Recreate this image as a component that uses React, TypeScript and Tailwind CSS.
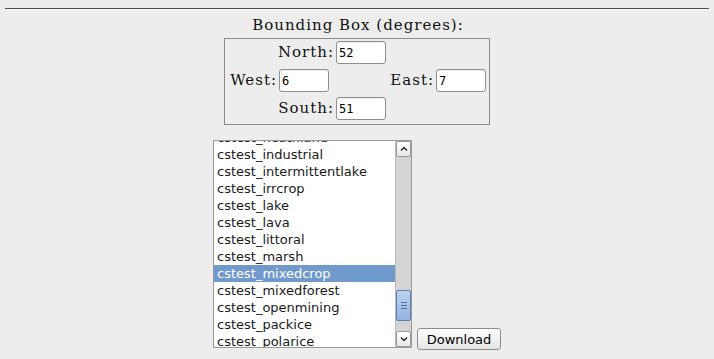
import React from "react";

const items = [
  "cstest_heathland",
  "cstest_industrial",
  "cstest_intermittentlake",
  "cstest_irrcrop",
  "cstest_lake",
  "cstest_lava",
  "cstest_littoral",
  "cstest_marsh",
  "cstest_mixedcrop",
  "cstest_mixedforest",
  "cstest_openmining",
  "cstest_packice",
  "cstest_polarice",
];

function Field({ value }: { value: string }) {
  return (
    <div className="w-[50px] h-[23px] rounded-[3px] border border-[#8e8e8e] bg-white pl-[2px] flex items-center font-['DejaVu_Sans_Mono',monospace] text-[12px] tracking-normal text-black shadow-[inset_0_1px_1px_rgba(0,0,0,0.08)]">
      {value}
    </div>
  );
}

function Label({ children, w }: { children: React.ReactNode; w: string }) {
  return <div className={`${w} text-right pr-[2px] leading-[23px]`}>{children}</div>;
}

export default function App() {
  return (
    <div className="min-h-screen bg-[#ededed] font-['DejaVu_Serif',serif] text-[15px] tracking-[1px] text-[#111]">
      <div className="pt-[8px] px-[5px]">
        <div className="h-[2px] border-t border-t-[#4f4f4f] border-b border-b-[#fbfbfb]" />
      </div>
      <div className="flex flex-col items-center">
        <div className="mt-[5px] leading-[20px] translate-x-[1px]">Bounding Box (degrees):</div>
        <div className="mt-[3px] w-[266px] h-[87px] border border-[#8a8a8a] pt-[2px]">
          <div className="flex h-[23px]">
            <Label w="w-[111px]">North:</Label>
            <Field value="52" />
          </div>
          <div className="flex h-[23px] mt-[5px]">
            <Label w="w-[54px]">West:</Label>
            <Field value="6" />
            <Label w="w-[107px]">East:</Label>
            <Field value="7" />
          </div>
          <div className="flex h-[23px] mt-[5px]">
            <Label w="w-[111px]">South:</Label>
            <Field value="51" />
          </div>
        </div>
        <div className="mt-[15px] flex items-end gap-[5px] font-['DejaVu_Sans',sans-serif] tracking-normal">
          <div className="mb-[2px] w-[199px] h-[208px] border border-[#9a9a9a] bg-white flex overflow-hidden">
            <div className="flex-1 overflow-hidden">
              <div className="-mt-[12px]">
                {items.map((it) => (
                  <div
                    key={it}
                    className={`h-[17px] leading-[17px] pl-[3px] text-[13px] whitespace-nowrap ${
                      it === "cstest_mixedcrop" ? "bg-[#7099cc] text-white" : "text-[#1a1a1a]"
                    }`}
                  >
                    {it}
                  </div>
                ))}
              </div>
            </div>
            <div className="w-[16px] bg-[#d4d4d4] border-l border-[#b8b8b8] flex flex-col">
              <div className="h-[16px] m-0 rounded-[2px] border border-[#9a9a9a] bg-gradient-to-b from-white to-[#e8e8e8] flex items-center justify-center">
                <svg width="8" height="6" viewBox="0 0 8 6">
                  <path d="M1 4.5 L4 1.5 L7 4.5" fill="none" stroke="#222" strokeWidth="1.4" />
                </svg>
              </div>
              <div className="flex-1 flex flex-col justify-end pb-[10px]">
                <div className="h-[31px] rounded-[2px] border border-[#5a80b8] bg-gradient-to-b from-[#bcd3f0] to-[#94b4df] flex flex-col items-center justify-center gap-[2px]">
                  <div className="w-[6px] h-px bg-[#4d6e9e]" />
                  <div className="w-[6px] h-px bg-[#4d6e9e]" />
                  <div className="w-[6px] h-px bg-[#4d6e9e]" />
                </div>
              </div>
              <div className="h-[16px] rounded-[2px] border border-[#9a9a9a] bg-gradient-to-b from-white to-[#e8e8e8] flex items-center justify-center">
                <svg width="8" height="6" viewBox="0 0 8 6">
                  <path d="M1 1.5 L4 4.5 L7 1.5" fill="none" stroke="#222" strokeWidth="1.4" />
                </svg>
              </div>
            </div>
          </div>
          <button className="w-[84px] h-[22px] rounded-[3px] border border-[#8c8c8c] bg-gradient-to-b from-white to-[#e4e4e4] text-[13px] text-black leading-none">
            Download
          </button>
        </div>
      </div>
    </div>
  );
}
